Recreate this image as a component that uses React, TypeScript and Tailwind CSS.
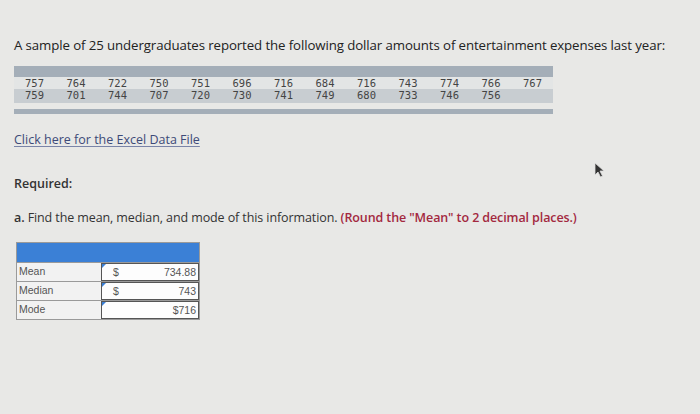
const row1 = ['757', '764', '722', '750', '751', '696', '716', '684', '716', '743', '774', '766', '767'];
const row2 = ['759', '701', '744', '707', '720', '730', '741', '749', '680', '733', '746', '756', ''];

const answers = [
  { label: 'Mean', dollar: true, value: '734.88' },
  { label: 'Median', dollar: true, value: '743' },
  { label: 'Mode', dollar: false, value: '$716' },
];

export default function App() {
  return (
    <div className="relative w-[700px] h-[414px] overflow-hidden bg-[#e8e8e6] text-[#222] font-['Open_Sans',sans-serif]">
      <div className="pl-[14px] pt-[36px]">
        <p className="text-[13.25px] leading-[18px] tracking-[-0.1px]">
          A sample of 25 undergraduates reported the following dollar amounts of entertainment expenses last year:
        </p>

        {/* data table */}
        <div className="mt-[12px] w-[539px]">
          <div className="h-[11px] bg-[#a4aeb8]" />
          <div className="flex h-[12px] bg-[#e3e5e5] font-['DejaVu_Sans_Mono',monospace] text-[10.5px] leading-[12px] text-[#444]">
            {row1.map((n, i) => (
              <span key={i} className="w-[41.5px] pl-[11px] shrink-0">{n}</span>
            ))}
          </div>
          <div className="flex h-[14px] bg-[#c8cdd1] font-['DejaVu_Sans_Mono',monospace] text-[10.5px] leading-[13px] text-[#444]">
            {row2.map((n, i) => (
              <span key={i} className="w-[41.5px] pl-[11px] shrink-0">{n}</span>
            ))}
          </div>
          <div className="h-[6px]" />
          <div className="h-[5px] bg-[#a4aeb8]" />
        </div>

        <a className="block mt-[17px] w-fit text-[12.5px] leading-[18px] text-[#3d4a78] underline underline-offset-2 decoration-[#7a84a8]">
          Click here for the Excel Data File
        </a>

        <p className="mt-[26px] text-[12.5px] leading-[18px] font-semibold text-[#333]">Required:</p>

        <p className="mt-[16px] text-[12.5px] leading-[18px] text-[#333] tracking-[-0.1px]">
          <span className="font-semibold">a.</span> Find the mean, median, and mode of this information.{' '}
          <span className="font-semibold text-[#a3283f]">(Round the "Mean" to 2 decimal places.)</span>
        </p>

        {/* answer table */}
        <div className="mt-[15px] w-[184px] ml-[2px] border border-[#9a9a9a] bg-white">
          <div className="h-[19px] bg-[#3b80d6]" />
          {answers.map((a) => (
            <div key={a.label} className="flex h-[19px] border-t border-[#9a9a9a] text-[10.5px] leading-[17px] text-[#555] font-['Liberation_Sans',sans-serif]">
              <div className="w-[84px] pl-[2px] bg-[#f2f2f2]">{a.label}</div>
              <div className="relative flex-1 flex border border-[#555] bg-[#fdfdfd] px-[2px]">
                <span className="absolute left-0 top-0 w-0 h-0 border-t-[4px] border-r-[4px] border-t-[#3b80d6] border-r-transparent" />
                <span className="pl-[9px] w-[24px]">{a.dollar ? '$' : ''}</span>
                <span className="flex-1 text-right">{a.value}</span>
              </div>
            </div>
          ))}
        </div>
      </div>

      {/* mouse cursor */}
      <svg className="absolute left-[594px] top-[162px]" width="12" height="16" viewBox="0 0 12 16">
        <path d="M1 1 L1 13 L4 10 L6.5 15 L8.5 14 L6 9 L10 9 Z" fill="#333" stroke="#ddd" strokeWidth="0.8" />
      </svg>
    </div>
  );
}
